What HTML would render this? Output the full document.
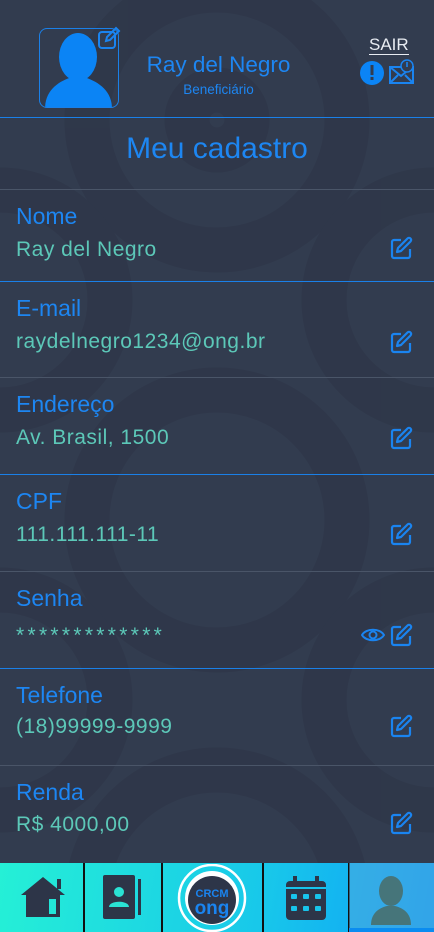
<!DOCTYPE html>
<html><head><meta charset="utf-8"><style>
*{margin:0;padding:0;box-sizing:border-box}
html,body{width:434px;height:932px;overflow:hidden}
body{background:#323c4f;font-family:"Liberation Sans",sans-serif;position:relative}
.bg{position:absolute;left:0;top:0}
.hl{position:absolute;left:0;width:434px;height:1px;background:#1a80e8}
.hl.g{background:#4a5568}
.lab{position:absolute;left:16px;color:#1d86f2;font-size:23px;white-space:nowrap}
.val{position:absolute;left:16px;color:#5cc8b8;font-size:21px;letter-spacing:.5px;white-space:nowrap}
.ed{position:absolute;left:389px;width:24px;height:24px}
.nav{position:absolute;left:0;top:863px;width:434px;height:69px;background:linear-gradient(100deg,#25f0d6,#18c8ea 60%,#0e9ef8);overflow:hidden}
.nav .d{position:absolute;top:0;width:2px;height:69px;background:#111}
</style></head><body>
<svg class="bg" width="434" height="932" viewBox="0 0 434 932">
<g fill="none" stroke="#2c3244" stroke-width="45" opacity=".45">
<circle cx="217" cy="120" r="130"/><circle cx="217" cy="120" r="30"/>
<circle cx="0" cy="300" r="110"/><circle cx="434" cy="300" r="110"/>
<circle cx="217" cy="520" r="130"/><circle cx="0" cy="700" r="110"/><circle cx="434" cy="700" r="110"/>
<circle cx="217" cy="900" r="130"/>
</g></svg>
<div style="position:absolute;left:39px;top:28px;width:80px;height:80px;border:1px solid #1a80e8;border-radius:8px;overflow:hidden">
<svg width="80" height="80" viewBox="0 0 80 80"><ellipse cx="38" cy="28" rx="19" ry="24" fill="#0b84f5"/><path d="M5 80 C5 60 20 52 32 48 L44 48 C56 52 72 60 72 80Z" fill="#0b84f5"/></svg>
</div>
<svg style="position:absolute;left:97px;top:26px" width="24" height="24" viewBox="0 0 24 24" fill="none" stroke="#1a84f0" stroke-width="2"><rect x="2" y="6" width="16" height="16" rx="3" fill="#323c4f"/><path d="M9 15l1-4 9-9 3 3-9 9z"/></svg>
<div style="position:absolute;left:120px;top:52px;width:197px;text-align:center;color:#1d86f2;font-size:22.5px;white-space:nowrap">Ray del Negro</div>
<div style="position:absolute;left:120px;top:82px;width:197px;text-align:center;color:#1d86f2;font-size:13.5px">Beneficiário</div>
<div style="position:absolute;left:369px;top:35px;color:#e8ecf2;font-size:17px;border-bottom:1px solid #e8ecf2;line-height:19px">SAIR</div>
<svg style="position:absolute;left:359px;top:59px" width="56" height="28" viewBox="0 0 56 28"><circle cx="13" cy="14" r="12" fill="#0b84f5"/><rect x="11.5" y="6" width="3" height="10" fill="#323c4f"/><rect x="11.5" y="18" width="3" height="3" fill="#323c4f"/><rect x="31" y="8" width="23" height="16" fill="none" stroke="#1a84f0" stroke-width="2"/><path d="M31 8l11 9 11-9M31 24l8-8M54 24l-8-8" fill="none" stroke="#1a84f0" stroke-width="2"/><circle cx="48" cy="7" r="6" fill="#323c4f" stroke="#1a84f0" stroke-width="1.5"/><rect x="47.2" y="3" width="1.6" height="5" fill="#1a84f0"/></svg>
<div class="hl" style="top:117px"></div>
<div style="position:absolute;left:0;top:132px;width:434px;text-align:center;color:#1d86f2;font-size:30px;white-space:nowrap">Meu cadastro</div>
<div class="hl g" style="top:189px"></div>

<div class="lab" style="top:203px">Nome</div><div class="val" style="top:238px">Ray del Negro</div>
<div class="hl" style="top:281px"></div>
<div class="lab" style="top:295px">E-mail</div><div class="val" style="top:330px">raydelnegro1234@ong.br</div>
<div class="hl g" style="top:377px"></div>
<div class="lab" style="top:391px">Endereço</div><div class="val" style="top:426px">Av. Brasil, 1500</div>
<div class="hl" style="top:474px"></div>
<div class="lab" style="top:488px">CPF</div><div class="val" style="top:523px">111.111.111-11</div>
<div class="hl g" style="top:571px"></div>
<div class="lab" style="top:585px">Senha</div><div class="val" style="top:624px;letter-spacing:3.3px">*************</div>
<div class="hl" style="top:668px"></div>
<div class="lab" style="top:682px">Telefone</div><div class="val" style="top:715px">(18)99999-9999</div>
<div class="hl g" style="top:765px"></div>
<div class="lab" style="top:779px">Renda</div><div class="val" style="top:813px">R$ 4000,00</div>

<svg width="0" height="0" style="position:absolute"><defs><g id="e" fill="none" stroke="#1a84f0" stroke-width="2.2" stroke-linejoin="round"><path d="M12 4H5a2 2 0 0 0-2 2v14a2 2 0 0 0 2 2h14a2 2 0 0 0 2-2v-7"/><path d="M18.5 2.5a2.1 2.1 0 0 1 3 3L12 15l-4 1 1-4z"/></g></defs></svg>
<svg class="ed" style="top:236px" viewBox="0 0 24 24"><use href="#e"/></svg>
<svg class="ed" style="top:330px" viewBox="0 0 24 24"><use href="#e"/></svg>
<svg class="ed" style="top:426px" viewBox="0 0 24 24"><use href="#e"/></svg>
<svg class="ed" style="top:522px" viewBox="0 0 24 24"><use href="#e"/></svg>
<svg class="ed" style="top:623px" viewBox="0 0 24 24"><use href="#e"/></svg>
<svg class="ed" style="top:714px" viewBox="0 0 24 24"><use href="#e"/></svg>
<svg class="ed" style="top:811px" viewBox="0 0 24 24"><use href="#e"/></svg>
<svg style="position:absolute;left:361px;top:625px" width="24" height="20" viewBox="0 0 24 20" fill="none" stroke="#1a84f0" stroke-width="2"><path d="M1 10C5 3 19 3 23 10C19 17 5 17 1 10Z"/><circle cx="12" cy="10" r="3.5"/></svg>

<div class="nav">
<div class="d" style="left:83px"></div><div class="d" style="left:161px"></div><div class="d" style="left:262px"></div><div class="d" style="left:348px"></div>
<div style="position:absolute;left:349px;top:0;width:85px;height:69px;background:rgba(80,170,220,.55)"></div>
<div style="position:absolute;left:349px;top:65px;width:85px;height:4px;background:#0a8cf0"></div>
<svg style="position:absolute;left:20px;top:10px" width="46" height="46" viewBox="0 0 46 46" fill="#2d3548"><path d="M1 22L23 4l22 18h-5v22H6V22z"/><rect x="37" y="6" width="4" height="10"/><rect x="29" y="26" width="7" height="15" fill="#22e6d8"/></svg>
<svg style="position:absolute;left:102px;top:10px" width="40" height="50" viewBox="0 0 40 50" fill="#2d3548"><rect x="1" y="2" width="32" height="44" rx="2"/><rect x="36" y="6" width="3" height="36"/><circle cx="17" cy="19" r="5" fill="#2ae2d4"/><path d="M7 34c0-7 20-7 20 0z" fill="#2ae2d4"/></svg>
<svg style="position:absolute;left:177px;top:1px" width="70" height="68" viewBox="0 0 70 68"><circle cx="35" cy="34" r="33" fill="none" stroke="#fff" stroke-width="2.5"/><circle cx="35" cy="34" r="27" fill="#fff"/><circle cx="35" cy="36" r="24" fill="#2d3548"/><text x="35" y="33" text-anchor="middle" font-family="Liberation Sans" font-weight="bold" font-size="11" fill="#1a84f0">CRCM</text><text x="35" y="50" text-anchor="middle" font-family="Liberation Sans" font-weight="bold" font-size="19" fill="#1a84f0">ong</text></svg>
<svg style="position:absolute;left:285px;top:12px" width="42" height="46" viewBox="0 0 42 46" fill="#2d3548"><rect x="1" y="6" width="40" height="39" rx="4"/><rect x="8" y="1" width="4" height="10"/><rect x="30" y="1" width="4" height="10"/><rect x="1" y="12" width="40" height="2" fill="#17c4ec"/><g fill="#17c4ec"><rect x="6" y="19" width="6" height="5" rx="1"/><rect x="18" y="19" width="6" height="5" rx="1"/><rect x="30" y="19" width="6" height="5" rx="1"/><rect x="6" y="31" width="6" height="5" rx="1"/><rect x="18" y="31" width="6" height="5" rx="1"/><rect x="30" y="31" width="6" height="5" rx="1"/></g></svg>
<svg style="position:absolute;left:369px;top:12px" width="44" height="50" viewBox="0 0 44 50" fill="#46757a"><ellipse cx="22" cy="16" rx="12" ry="15"/><path d="M2 50C2 38 10 33 18 31h8c8 2 16 7 16 19z"/></svg>
</div>
</body></html>
